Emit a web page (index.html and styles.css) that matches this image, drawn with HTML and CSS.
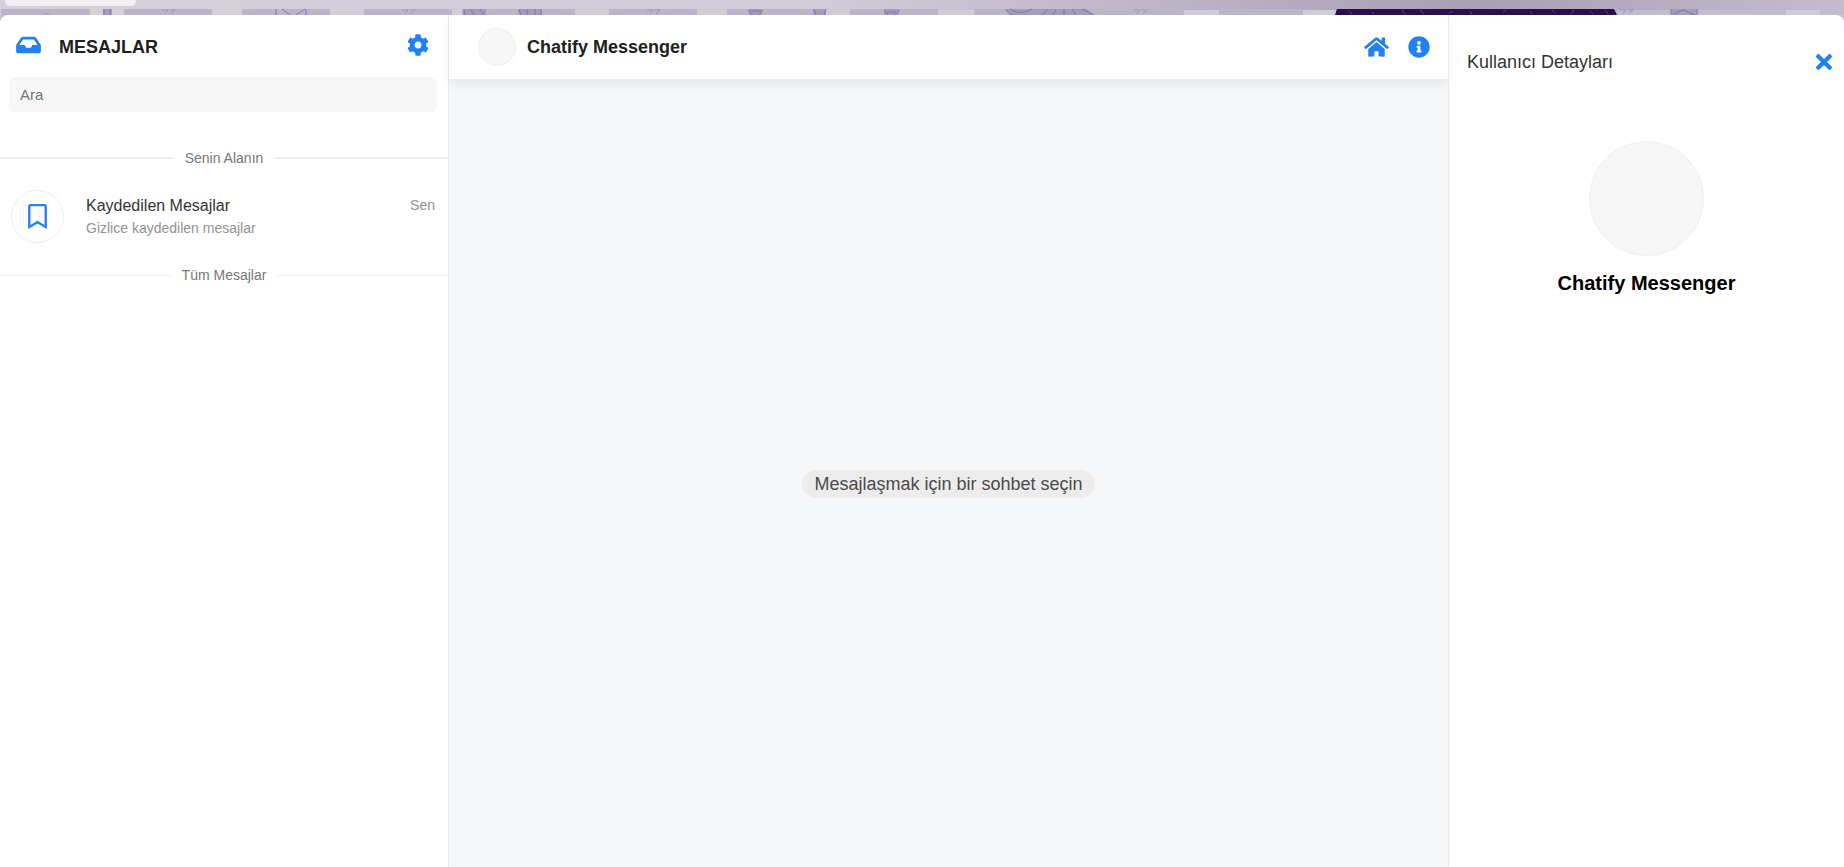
FILE: index.html
```
<!DOCTYPE html>
<html lang="tr">
  <head>
    <meta charset="UTF-8" />
    <meta name="viewport" content="width=device-width, initial-scale=1.0" />
    <title>Chatify Messenger</title>
    <link rel="stylesheet" href="styles.css">
  </head>
  <body>
    <div class="banner">
      <svg class="banner-art" viewBox="0 0 1844 15" preserveAspectRatio="none" aria-hidden="true">
        <defs>
          <linearGradient id="bar" x1="0" x2="1" y1="0" y2="0">
            <stop offset="0" stop-color="#d6d0db" />
            <stop offset="0.45" stop-color="#d1cad7" />
            <stop offset="0.67" stop-color="#b8afc3" />
            <stop offset="0.8" stop-color="#a89eb6" />
            <stop offset="1" stop-color="#c4bccd" />
          </linearGradient>
        </defs>
        <rect width="1844" height="15" fill="url(#bar)" />
        <path fill="#bdb4c8" d="M1 9H90V15H1zM124 9H212V15H124zM242 9H330V15H242zM364 9H452V15H364zM462 9H575V15H462zM609 9H697V15H609zM727 9H815V15H727zM850 9H938V15H850zM974 9H1184V15H974zM1219 9H1303V15H1219z" />
        <path fill="#d1cad7" d="M697 10H727V15H697zM938 10H974V15H938zM1184 10H1219V15H1184zM1303 10H1336V15H1303zM1786 10H1820V15H1786z" />
        <path fill="#c4bccd" d="M1617 10H1786V15H1617z" />
        <path fill="#a79bba" d="M103 9H112V15H103zM463 9H486V15H463zM518 9H542V15H518zM749 9H762V15H749zM813 9H826V15H813zM884 9H899V15H884zM1006 9H1086L1095 15H1010zM1671 9H1697V15H1671z" />
        <path fill="none" stroke="#8375a3" d="M104 9V15M110 9V15M276 9V15M282 9L290 15M305 9L296 15M306 9V15M464 9L465 15M470 9L474 15M480 9L484 15M519 9L521 15M527 9V15M535 9V15M541 9V15M748 10L752 15M750 11H761M763 10L759 15M814 9L816 15M826 9L824 15M884 10L888 15M886 12H896M900 10L895 15M1006 9Q1008 15 1014 15M1010 9Q1020 16 1032 9M1048 9L1042 15M1056 9L1053 15M1064 9V15M1072 9L1076 15M1082 9L1094 15M1671 9V15M1673 14L1683 10L1695 15M1697 9V15" />
        <path fill="none" stroke="#a197b3" d="M162 10H168L165 14M170 10H175L171 14M402 10H408L405 14M410 10H415L411 14M647 10H653L650 14M655 10H660L656 14M1134 10H1140L1137 14M1142 10H1147L1143 14M1620 10H1626L1623 14M1628 10H1633L1629 14M44 15L47 13L49 15" />
        <path fill="#27104c" d="M1337 9H1614L1617 15H1335z" />
        <path fill="none" stroke="#5a4678" d="M1349 11L1352 14M1372 12L1374 14M1402 10L1405 14M1420 10L1424 14M1449 13L1453 11M1470 11L1472 14M1503 12L1506 10M1530 11L1533 14M1552 10L1555 13M1571 14L1574 10M1590 11L1593 14M1605 10L1608 14" />
        <path d="M5 0H136V1Q136 6 130 6H11Q5 6 5 1z" fill="#f1eff3" />
      </svg>
    </div>

    <div class="messenger">
      <aside class="list-view">
        <div class="list-header">
          <h1 class="list-title">
            <svg class="icon-inbox" viewBox="0 0 576 512" aria-hidden="true">
              <path d="M567.938 243.908L462.25 85.374A48.003 48.003 0 0 0 422.311 64H153.689a48 48 0 0 0-39.938 21.374L8.062 243.908A47.994 47.994 0 0 0 0 270.533V400c0 26.51 21.49 48 48 48h480c26.51 0 48-21.49 48-48V270.533a47.994 47.994 0 0 0-8.062-26.625zM162.252 128h251.497l85.333 128H376l-32 64H232l-32-64H76.918l85.334-128z" />
            </svg>
            <span>MESAJLAR</span>
          </h1>
          <button class="icon-button" type="button" aria-label="Ayarlar">
            <svg class="icon-cog" viewBox="0 0 512 512" aria-hidden="true">
              <path d="M487.4 315.7l-42.6-24.6c4.3-23.2 4.3-47 0-70.2l42.6-24.6c4.9-2.8 7.1-8.6 5.5-14-11.1-35.6-30-67.8-54.7-94.6-3.8-4.1-10-5.1-14.8-2.3L380.8 110c-17.9-15.4-38.5-27.3-60.8-35.1V25.8c0-5.6-3.9-10.5-9.4-11.7-36.7-8.2-74.3-7.8-109.2 0-5.5 1.2-9.4 6.1-9.4 11.7V75c-22.2 7.9-42.8 19.8-60.8 35.1L88.7 85.5c-4.9-2.8-11-1.9-14.8 2.3-24.7 26.7-43.6 58.9-54.7 94.6-1.7 5.4.6 11.2 5.5 14L67.3 221c-4.3 23.2-4.3 47 0 70.2l-42.6 24.6c-4.9 2.8-7.1 8.6-5.5 14 11.1 35.6 30 67.8 54.7 94.6 3.8 4.1 10 5.1 14.8 2.3l42.6-24.6c17.9 15.4 38.5 27.3 60.8 35.1v49.2c0 5.6 3.9 10.5 9.4 11.7 36.7 8.2 74.3 7.8 109.2 0 5.5-1.2 9.4-6.1 9.4-11.7v-49.2c22.2-7.9 42.8-19.8 60.8-35.1l42.6 24.6c4.9 2.8 11 1.9 14.8-2.3 24.7-26.7 43.6-58.9 54.7-94.6 1.5-5.5-.7-11.3-5.6-14.1zM256 336c-44.1 0-80-35.9-80-80s35.9-80 80-80 80 35.9 80 80-35.9 80-80 80z" />
            </svg>
          </button>
        </div>
        <input class="search" type="text" placeholder="Ara" aria-label="Ara" />

        <h2 class="section-title section-title-thick"><span>Senin Alanın</span></h2>
        <a class="contact" href="#">
          <span class="contact-avatar">
            <svg class="icon-bookmark" viewBox="0 0 384 512" aria-hidden="true">
              <path d="M336 0H48C21.49 0 0 21.49 0 48v464l192-112 192 112V48c0-26.51-21.49-48-48-48zm0 428.43l-144-84-144 84V54a6 6 0 0 1 6-6h276c3.314 0 6 2.683 6 5.996V428.43z" />
            </svg>
          </span>
          <span class="contact-text">
            <span class="contact-name">Kaydedilen Mesajlar</span>
            <span class="contact-note">Gizlice kaydedilen mesajlar</span>
          </span>
          <span class="contact-owner">Sen</span>
        </a>
        <h2 class="section-title"><span>Tüm Mesajlar</span></h2>
      </aside>

      <main class="chat">
        <header class="chat-header">
          <span class="avatar"></span>
          <a class="chat-name" href="#">Chatify Messenger</a>
          <nav class="chat-nav">
            <a class="icon-button" href="#" aria-label="Ana sayfa">
              <svg class="icon-home" viewBox="0 0 576 512" aria-hidden="true">
                <path d="M280.37 148.26L96 300.11V464a16 16 0 0 0 16 16l112.06-.29a16 16 0 0 0 15.92-16V368a16 16 0 0 1 16-16h64a16 16 0 0 1 16 16v95.64a16 16 0 0 0 16 16.05L464 480a16 16 0 0 0 16-16V300L295.67 148.26a12.19 12.19 0 0 0-15.3 0zM571.6 251.47L488 182.56V44.05a12 12 0 0 0-12-12h-56a12 12 0 0 0-12 12v72.61L318.47 43a48 48 0 0 0-61 0L4.34 251.47a12 12 0 0 0-1.6 16.9l25.5 31A12 12 0 0 0 45.15 301l235.22-193.74a12.19 12.19 0 0 1 15.3 0L530.9 301a12 12 0 0 0 16.9-1.6l25.5-31a12 12 0 0 0-1.7-16.93z" />
              </svg>
            </a>
            <button class="icon-button" type="button" aria-label="Bilgi">
              <svg class="icon-info" viewBox="0 0 512 512" aria-hidden="true">
                <path d="M256 8C119.043 8 8 119.083 8 256c0 136.997 111.043 248 248 248s248-111.003 248-248C504 119.083 392.957 8 256 8zm0 110c23.196 0 42 18.804 42 42s-18.804 42-42 42-42-18.804-42-42 18.804-42 42-42zm56 254c0 6.627-5.373 12-12 12h-88c-6.627 0-12-5.373-12-12v-24c0-6.627 5.373-12 12-12h12v-64h-12c-6.627 0-12-5.373-12-12v-24c0-6.627 5.373-12 12-12h64c6.627 0 12 5.373 12 12v100h12c6.627 0 12 5.373 12 12v24z" />
              </svg>
            </button>
          </nav>
        </header>
        <div class="chat-body">
          <p class="hint">Mesajlaşmak için bir sohbet seçin</p>
        </div>
      </main>

      <aside class="details">
        <div class="details-header">
          <h2 class="details-title">Kullanıcı Detayları</h2>
          <button class="icon-button" type="button" aria-label="Kapat">
            <svg class="icon-close" viewBox="0 0 352 352" aria-hidden="true">
              <path d="M242.72 176l100.07-100.07c12.28-12.28 12.28-32.19 0-44.48l-22.24-22.24c-12.28-12.28-32.19-12.28-44.48 0L176 109.28 75.93 9.21c-12.28-12.28-32.19-12.28-44.48 0L9.21 31.45c-12.28 12.28-12.28 32.19 0 44.48L109.28 176 9.21 276.07c-12.28 12.28-12.28 32.19 0 44.48l22.24 22.24c12.28 12.28 32.2 12.28 44.48 0L176 242.72l100.07 100.07c12.28 12.28 32.2 12.28 44.48 0l22.24-22.24c12.28-12.28 12.28-32.19 0-44.48L242.72 176z" />
            </svg>
          </button>
        </div>
        <div class="avatar avatar-large"></div>
        <p class="details-name">Chatify Messenger</p>
      </aside>
    </div>
  </body>
</html>
```
FILE: styles.css
```
* {
  box-sizing: border-box;
}
body {
  margin: 0;
  height: 100vh;
  display: flex;
  flex-direction: column;
  background: #c9c1d1;
  font-family: 'Liberation Sans', Arial, sans-serif;
  color: #202020;
}
h1,
h2,
p {
  margin: 0;
  font-weight: normal;
}
a {
  color: inherit;
  text-decoration: none;
}
svg {
  display: block;
  fill: #2180f3;
}

/* strip above the messenger */
.banner {
  height: 15px;
}
.banner-art {
  width: 100%;
  height: 100%;
}

.messenger {
  flex: 1;
  min-height: 0;
  display: flex;
  background: #fff;
  border-radius: 8px 8px 0 0;
  overflow: hidden;
}
.icon-button {
  display: block;
  padding: 0;
  border: none;
  background: none;
  cursor: pointer;
}

/* contact list */
.list-view {
  width: 449px;
  flex-shrink: 0;
  border-right: 1px solid #e9eaec;
}
.list-header {
  display: flex;
  justify-content: space-between;
  align-items: center;
  height: 62px;
  padding: 2px 19px 0 16px;
}
.list-title {
  display: flex;
  align-items: center;
  gap: 18px;
  font-size: 18px;
  font-weight: bold;
}
.icon-inbox {
  width: 25px;
  height: 22px;
  margin-bottom: 4px;
}
.icon-cog {
  width: 22px;
  height: 22px;
  margin-bottom: 4px;
}
.search {
  display: block;
  width: calc(100% - 20px);
  height: 35px;
  margin: 0 11px 0 9px;
  padding: 0 11px;
  border: none;
  border-radius: 6px;
  background: #f7f7f7;
  font-family: inherit;
  font-size: 15px;
}
.search::placeholder {
  color: #757575;
}
.section-title {
  display: flex;
  align-items: center;
  gap: 11px;
  height: 20px;
  font-size: 14px;
  color: #767676;
}
.section-title::before,
.section-title::after {
  content: '';
  flex: 1;
  height: 1px;
  background: #eee;
}
.section-title-thick {
  margin-top: 36px;
}
.section-title-thick::before,
.section-title-thick::after {
  height: 2px;
}
.contact {
  display: flex;
  align-items: center;
  height: 97px;
  padding: 0 13px 0 11px;
}
.contact-avatar {
  display: flex;
  align-items: center;
  justify-content: center;
  width: 53px;
  height: 53px;
  margin-right: 22px;
  border: 1px solid #eee;
  border-radius: 50%;
}
.icon-bookmark {
  width: 19px;
  height: 25px;
}
.contact-text {
  flex: 1;
  display: flex;
  flex-direction: column;
}
.contact-name {
  font-size: 16px;
  line-height: 22px;
  color: #333;
}
.contact-note {
  font-size: 14px;
  line-height: 22px;
  color: #929292;
}
.contact-owner {
  align-self: flex-start;
  margin-top: 27px;
  font-size: 14px;
  line-height: 20px;
  color: #929292;
}

/* conversation */
.chat {
  flex: 1;
  display: flex;
  flex-direction: column;
  background: #f5f7f9;
}
.chat-header {
  display: flex;
  align-items: center;
  gap: 11px;
  height: 64px;
  padding: 0 18px 0 29px;
  background: #fff;
  box-shadow: 0 5px 10px rgba(0, 0, 0, 0.07);
}
.avatar {
  width: 38px;
  height: 38px;
  background: #f7f7f7;
  border: 1px solid #eee;
  border-radius: 50%;
}
.chat-name {
  font-size: 18px;
  font-weight: bold;
}
.chat-nav {
  display: flex;
  align-items: center;
  gap: 19px;
  margin-left: auto;
}
.icon-home {
  width: 25px;
  height: 22px;
}
.icon-info {
  width: 22px;
  height: 22px;
}
.chat-body {
  flex: 1;
  display: flex;
  align-items: center;
  justify-content: center;
  padding-top: 22px;
}
.hint {
  padding: 0 12px;
  border-radius: 14px;
  background: #ececec;
  font-size: 18px;
  line-height: 28px;
  color: #4a4a4a;
}

/* user details */
.details {
  width: 396px;
  flex-shrink: 0;
  border-left: 1px solid #e9eaec;
}
.details-header {
  display: flex;
  align-items: center;
  justify-content: space-between;
  height: 94px;
  padding: 0 12px 0 18px;
}
.details-title {
  font-size: 18px;
  color: #333;
}
.icon-close {
  width: 16px;
  height: 16px;
}
.avatar-large {
  width: 115px;
  height: 115px;
  margin: 32px auto 15px;
}
.details-name {
  font-size: 20px;
  font-weight: bold;
  line-height: 24px;
  text-align: center;
  color: #000;
}
```
